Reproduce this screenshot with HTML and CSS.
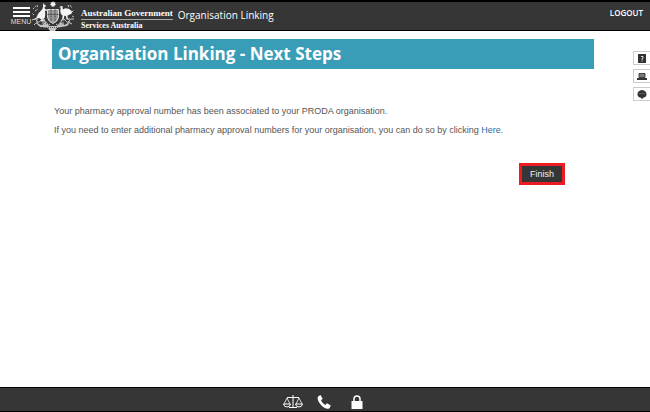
FILE: index.html
```html
<!DOCTYPE html>
<html lang="en">
<head>
<meta charset="utf-8">
<meta name="viewport" content="width=device-width, initial-scale=1">
<title>Organisation Linking - Next Steps</title>
<link rel="stylesheet" href="styles.css">
</head>
<body>
<header class="topbar">
  <button class="menu" type="button">
    <span class="menu-bars"></span>
    <span class="menu-label">MENU</span>
  </button>
  <svg class="crest" viewBox="0 0 44 30" aria-hidden="true">
    <g fill="#f4f4f4">
      <path d="M22 0l.8 1.600 1.800-.4-.7 1.600 1.200 1.300-1.700.3-.1 1.700L22 5.200l-1.300.9-.1-1.700-1.700-.3 1.200-1.300-.7-1.600 1.800.4z"/>
      <path d="M12.300 2l1 1.500 1.500.9.200 1-1.500.4.500 2.200 2.400.8.300 1-2.800-.1.400 3.200-.5 3.500-1.500 2.500 2.400 1.500H9.500l1-1.800-2.500-1.600-2.500.8-3.500 1.200 3.500-2.600 1.600-3.600 3-3.200 1.600-2.200.3-2z"/>
      <path d="M28 6.500l2-1.600 1.500.3.400 3.400 2.300-1.300 3.500.5 3 2.200.3 2.300-2.500 1.500-2 .6.200 2.500 1.200 1.500h-2.300l-.7-3.500-1.600-.2-.5 3.700h-1.800l.6-4-1.700-1.300-.6-2.500.4-4.400z"/>
    </g>
    <path d="M16.500 8.500h11v8q-.7 4-5.500 6-4.800-2-5.500-6z" fill="#999" stroke="#ddd"/>
    <path d="M16.500 13.500h11M20 8.500v11M24 8.500v11" fill="none" stroke="#444" stroke-dasharray="2 1"/>
    <g fill="none" stroke="#ccc">
      <path d="M1 19q4-2 5 1t4-1 4 2 5 2M43 18q-4-1-5 2t-4-1-4 2-5 2M3 24q3-4 5 0t5-1 4 3M41 23q-3-3-5 0t-5 0-4 3"/>
      <path d="M2 8l3-3m-1 5l3-2m-1-4l1 3M3 14l-2-2m38-8l2 3m-4-3l1 3m3 4l2-2m-2 6l2 1M6 17v5m6-4v7m20-7v7m6-8v5" stroke-dasharray="2 1"/>
    </g>
    <path d="M5 22l5 2 5-1 3 2h8l3-2 5 1 5-2-3 3-6 1-4 1-2 3h-5l-2-3-6-1-3-1z" fill="#c5c5c5"/>
    <path d="M15 26.500h14" stroke="#555" stroke-dasharray="1 1"/>
  </svg>
  <div class="agency">
    <span class="government">Australian Government</span>
    <span class="department">Services Australia</span>
  </div>
  <span class="app-name">Organisation Linking</span>
  <a class="logout" href="#">LOGOUT</a>
</header>

<main class="content">
  <h1 class="banner">Organisation Linking - Next Steps</h1>
  <div class="message">
    <p>Your pharmacy approval number has been associated to your PRODA organisation.</p>
    <p>If you need to enter additional pharmacy approval numbers for your organisation, you can do so by clicking <a class="link" href="#">Here</a>.</p>
  </div>
  <div class="actions">
    <button class="finish" type="button">Finish</button>
  </div>
</main>

<aside class="tools">
  <button class="tool" type="button" aria-label="Help">
    <svg viewBox="0 0 10 9"><path d="M1 0h8v9H1z" fill="#333"/><path d="M4 2.500h2v1.700L5 5v1M5 6.500v1" fill="none" stroke="#ddd"/></svg>
  </button>
  <button class="tool" type="button" aria-label="Computer">
    <svg viewBox="0 0 10 9"><path d="M2 1.500h6v4H2z" fill="#777" stroke="#444"/><path d="M0 6h10v2H0z" fill="#333"/></svg>
  </button>
  <button class="tool" type="button" aria-label="Chat">
    <svg viewBox="0 0 10 9"><path d="M5 0c5.500 0 6 7.500 1.500 7.500L5 9 3.500 7.500C-1 7.500-.5 0 5 0z" fill="#333"/><path d="M2.500 3.500h5" stroke="#888" stroke-dasharray="1 1"/></svg>
  </button>
</aside>

<footer class="bottombar">
  <a href="#" aria-label="Legal">
    <svg width="20" height="14" viewBox="0 0 20 14" fill="none" stroke="#fff"><path d="M10 0v12M6 12.500h8M4 2.500h12"/><path d="M4 3L1 9m3-6l3 6M16 3l-3 6m3-6l3 6" stroke-width=".8"/><path d="M.5 9h7Q7 12 4 12T.500 9zM12.500 9h7q-.5 3-3.500 3t-3.500-3z" fill="#363636"/></svg>
  </a>
  <a href="#" aria-label="Contact">
    <svg width="14" height="14" viewBox="0 0 14 14"><path d="M1 1.500L3.500 0l2.200 3.700-1.700 1.500q1.200 3 4.300 4.700L10 8.300l3.800 2.200-1.300 2.700Q9 15.200 4.200 10.300-.5 5.200 1 1.500z" fill="#fff"/></svg>
  </a>
  <a class="privacy" href="#" aria-label="Privacy">
    <svg width="12" height="14" viewBox="0 0 12 14"><path d="M3 7V4q0-3 3-3t3 3v3" fill="none" stroke="#fff" stroke-width="1.500"/><path d="M.5 6h11v8H.5z" fill="#fff"/></svg>
  </a>
</footer>
</body>
</html>
```
FILE: styles.css
```css
* {
  box-sizing: border-box;
}

body {
  margin: 0;
  min-height: 100vh;
  display: flex;
  flex-direction: column;
  background: #fff;
  color: #555;
  font-family: "Liberation Sans", Arial, sans-serif;
  font-size: 9px;
}

button {
  margin: 0;
  padding: 0;
  font: inherit;
  cursor: pointer;
}

svg {
  display: block;
}

.topbar {
  display: flex;
  align-items: center;
  height: 31px;
  padding: 0 7px 0 11px;
  border-top: 2px solid #000;
  border-bottom: 1px solid #000;
  background: #363636;
  color: #fff;
}

.menu {
  width: 20px;
  display: flex;
  flex-direction: column;
  align-items: center;
  gap: 1px;
  border: 0;
  background: none;
  color: #ddd;
  font-size: 7px;
  line-height: 8px;
}

.menu-bars {
  width: 17px;
  height: 10px;
  border: solid #fff;
  border-width: 2px 0;
  background: linear-gradient(#fff, #fff) center / 100% 2px no-repeat;
}

.crest {
  width: 44px;
  height: 30px;
}

.agency {
  display: flex;
  flex-direction: column;
  padding-top: 6px;
  margin: 0 5px 0 6px;
  font-family: "Liberation Serif", "Times New Roman", serif;
  font-size: 8px;
  font-weight: bold;
  line-height: 12px;
  white-space: nowrap;
}

.government {
  border-bottom: 1px solid #aaa;
  font-size: 9px;
}

.app-name {
  padding-bottom: 2px;
  font-family: "Open Sans", sans-serif;
  font-size: 10px;
}

.logout {
  padding-bottom: 7px;
  margin-left: auto;
  color: #fff;
  font-family: "Open Sans", sans-serif;
  font-size: 8px;
  font-weight: 600;
  text-decoration: none;
}

.content {
  flex: 1;
  margin: 8px 56px 0 52px;
}

.banner {
  margin: 0;
  padding: 0 6px;
  background: #3a9db8;
  color: #fff;
  font-family: "Open Sans", sans-serif;
  font-size: 17px;
  font-weight: 700;
  line-height: 30px;
}

.message {
  padding: 36px 2px 0;
  line-height: 12px;
}

.message p {
  margin: 0 0 7px;
}

.link {
  color: #2a6ca8;
  text-decoration: none;
}

.actions {
  display: flex;
  justify-content: flex-end;
  padding: 20px 29px 0 0;
}

.finish {
  width: 46px;
  height: 22px;
  border: 3px solid #ed1c24;
  background: #363636;
  color: #eee;
}

.tools {
  position: absolute;
  top: 51px;
  right: 0;
  display: grid;
  gap: 4px;
}

.tool {
  width: 17px;
  height: 14px;
  display: grid;
  place-items: center;
  border: 1px solid #ccc;
  border-right: 0;
  background: #fff;
}

.tool svg {
  width: 10px;
  height: 9px;
}

.bottombar {
  display: flex;
  justify-content: center;
  align-items: center;
  gap: 14px;
  height: 25px;
  padding: 4px 5px 0 0;
  border: solid #000;
  border-width: 1px 0;
  background: #363636;
}

.privacy {
  margin-left: 6px;
}
```
